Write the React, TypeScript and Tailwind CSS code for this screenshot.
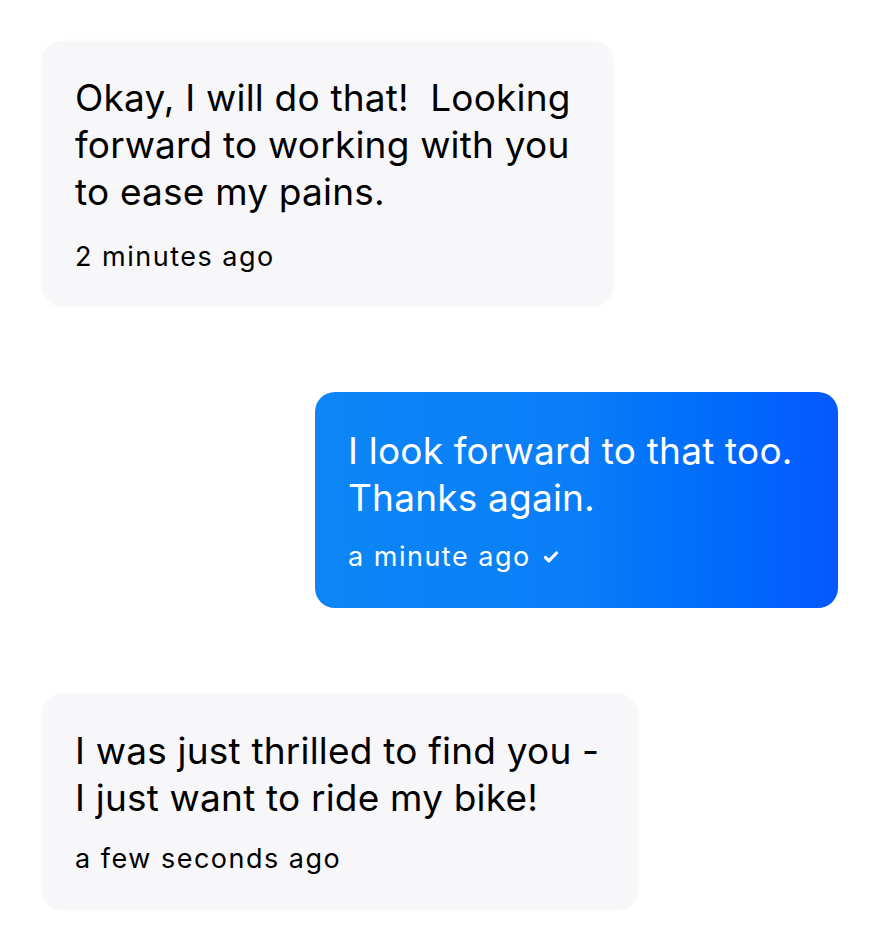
function Check() {
  return (
    <svg viewBox="0 0 16 16" className="ml-[12px] h-[16px] w-[16px]" fill="none">
      <path d="M2.5 8.5l3.4 3.4L13.5 4" stroke="white" strokeWidth="3.2" strokeLinecap="round" strokeLinejoin="round" />
    </svg>
  );
}

type BubbleProps = {
  lines: string[];
  time: string;
  mine?: boolean;
  box: string;
  gap: string;
};

function Bubble({ lines, time, mine, box, gap }: BubbleProps) {
  return (
    <div
      className={
        mine
          ? `${box} self-end rounded-[20px] bg-gradient-to-r from-[#0c86f6] via-[#0a7ef8] to-[#0658fd] px-[33px] text-white`
          : `${box} rounded-[20px] bg-[#f7f7fa] px-[33px] text-black shadow-[0_0_4px_rgba(0,0,0,0.03)]`
      }
    >
      <div className="whitespace-pre text-[37px] leading-[47px] tracking-[0.2px]">
        {lines.map((l) => (
          <div key={l}>{l}</div>
        ))}
      </div>
      <div className={`${gap} flex items-center text-[27px] leading-[31px] tracking-[1.5px]`}>
        <span>{time}</span>
        {mine && <Check />}
      </div>
    </div>
  );
}

export default function App() {
  return (
    <div
      className="flex min-h-screen flex-col gap-[86px] bg-white pt-[41px] pr-[43px] pl-[42px]"
      style={{ fontFamily: 'Inter, "Noto Sans", sans-serif' }}
    >
      <Bubble
        box="w-[571px] pt-[33px] pb-[34px]"
        gap="mt-[26px]"
        lines={['Okay, I will do that!  Looking', 'forward to working with you', 'to ease my pains.']}
        time="2 minutes ago"
      />
      <Bubble
        mine
        box="w-[523px] pt-[35px] pb-[36px]"
        gap="mt-[20px]"
        lines={['I look forward to that too.', 'Thanks again.']}
        time="a minute ago"
      />
      <Bubble
        box="w-[596px] pt-[33px] pb-[36px]"
        gap="mt-[22px]"
        lines={['I was just thrilled to find you -', 'I just want to ride my bike!']}
        time="a few seconds ago"
      />
    </div>
  );
}
